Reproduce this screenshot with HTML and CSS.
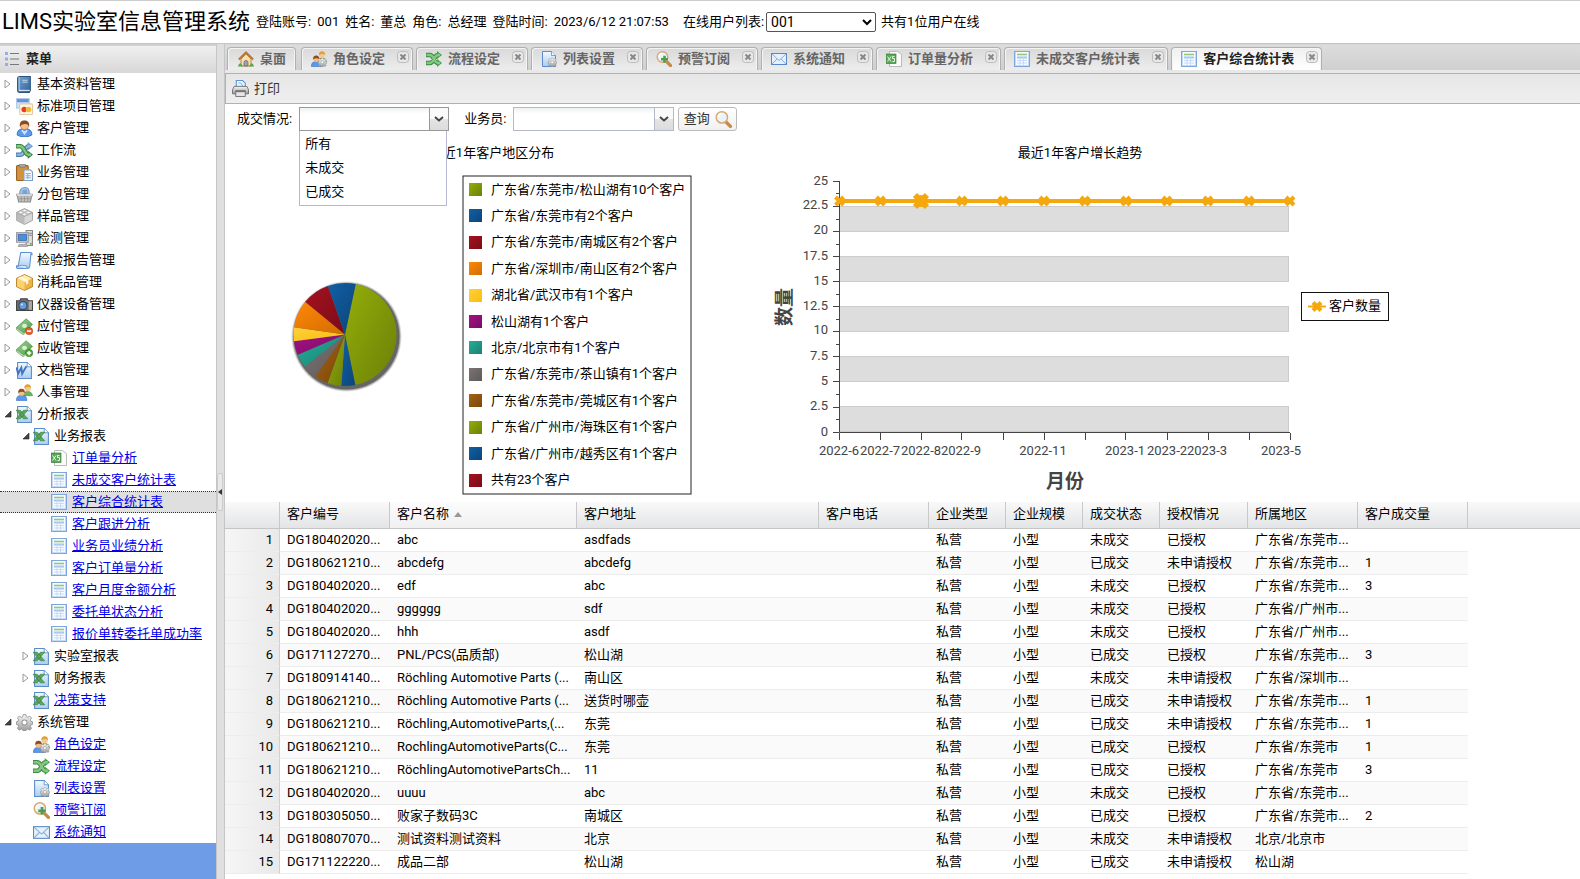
FILE: index.html
```html
<!DOCTYPE html>
<html lang="zh-CN">
<head>
<meta charset="utf-8">
<title>LIMS实验室信息管理系统</title>
<link rel="stylesheet" href="styles.css">
</head>
<body>
<svg class="defs" aria-hidden="true">
  <defs>
    <linearGradient id="g-page" x1="0" y1="0" x2="0" y2="1"><stop offset="0" stop-color="#f4faff"/><stop offset="1" stop-color="#a9cdf2"/></linearGradient>
    <linearGradient id="g-book" x1="0" y1="0" x2="1" y2="1"><stop offset="0" stop-color="#74a3d0"/><stop offset="1" stop-color="#2f639b"/></linearGradient>
    <linearGradient id="g-grey" x1="0" y1="0" x2="0" y2="1"><stop offset="0" stop-color="#f6f6f6"/><stop offset="1" stop-color="#9a9a9a"/></linearGradient>
    <linearGradient id="g-green" x1="0" y1="0" x2="1" y2="1"><stop offset="0" stop-color="#9ed68f"/><stop offset="1" stop-color="#4c9a4c"/></linearGradient>
  </defs>
  <symbol id="i-list" viewBox="0 0 16 16"><g fill="#8fb0ea"><rect x="1" y="1" width="3" height="3"/><rect x="1" y="6.500" width="3" height="3"/><rect x="1" y="12" width="3" height="3"/></g><path d="M6 2.500h9M6 8h9M6 13.500h9" stroke="#777" stroke-width="1.200"/></symbol>
  <symbol id="i-book" viewBox="0 0 16 16"><path d="M3.500.5h10v13l-1 2h-9q-2 0-2-2v-11q0-2 2-2z" fill="url(#g-book)" stroke="#2c5480"/><path d="M3 1v13" stroke="#a8c8e6"/><path d="M6 4h5M6 5.800h5" stroke="#d4e6f6" stroke-width=".8"/><path d="M3 13.500h10" stroke="#e6eef6"/></symbol>
  <symbol id="i-cards" viewBox="0 0 16 16"><rect x=".5" y=".5" width="12" height="9" fill="#cfe0f5" stroke="#b4cbe8"/><path d="M1 1h11v3H1z" fill="#5f93d8"/><rect x="3.500" y="5.500" width="12" height="10" rx="1" fill="#fff6e6" stroke="#e1c9a0"/><circle cx="7.700" cy="10.800" r="2.600" fill="#e63c2c"/><circle cx="11.800" cy="10.800" r="2.600" fill="#f3b83a"/></symbol>
  <symbol id="i-user" viewBox="0 0 16 16"><path d="M1 14q0-6 7-6t7 6q-3 2-7 2t-7-2z" fill="#5e9bea" stroke="#2f68b8" stroke-width=".8"/><path d="M6 9q2 3 4 0l1 1-3 4-3-4z" fill="#cfe3fb"/><circle cx="8" cy="5" r="4" fill="#f2c08c" stroke="#a8683a" stroke-width=".5"/><path d="M3.600 6Q3 .5 8 .5T12.400 6Q11 3.500 8 3.800T3.600 6z" fill="#8a4b22"/></symbol>
  <symbol id="i-flow" viewBox="0 0 16 16"><path d="M0 4h4q2 0 4 4t4 4h1M0 12h4q2 0 4-4t4-4h1" fill="none" stroke="#3d8a42" stroke-width="4.400"/><path d="M11 0l5 4-5 4zM11 8l5 4-5 4z" fill="#4d9f50"/><path d="M.5 4H4q2 0 4 4t4 4h2M.5 12H4q2 0 4-4t4-4h2" fill="none" stroke="#84c884" stroke-width="2.400"/></symbol>
  <symbol id="i-flowblue" viewBox="0 0 16 16"><path d="M0 12h4q2 0 4-4t4-4h1" fill="none" stroke="#4f82ba" stroke-width="4.400"/><path d="M11 0l5 4-5 4z" fill="#6d9ccf"/><path d="M.5 12H4q2 0 4-4t4-4h2" fill="none" stroke="#94bbe2" stroke-width="2"/><path d="M0 4h4q2 0 4 4t4 4h1" fill="none" stroke="#3b8543" stroke-width="4.400"/><path d="M11 8l5 4-5 4z" fill="#3b8543"/><path d="M.5 4H4q2 0 4 4t4 4h2" fill="none" stroke="#83c783" stroke-width="2.200"/></symbol>
  <symbol id="i-clip" viewBox="0 0 16 16"><rect x=".5" y="1.500" width="11" height="14" rx="1" fill="#d3923f" stroke="#9a6020"/><rect x="3" y="0" width="6" height="3" rx="1" fill="#aaa" stroke="#666" stroke-width=".5"/><path d="M7.500 5.500h6l2 2v8h-8z" fill="#f3f8fe" stroke="#7fa0c8"/><path d="M9 9h5M9 11h5M9 13h5M11 8.500V14" stroke="#8cb2e0"/></symbol>
  <symbol id="i-basket" viewBox="0 0 16 16"><path d="M3.500 8Q3 2 8 1.500T12.500 8" fill="#a6c6e6" stroke="#7a98b8"/><path d="M6 8V4l4-1 1 5z" fill="#6fa6dc"/><path d="M1 8h14l-1.500 7h-11z" fill="#c4c4c4" stroke="#888"/><path d="M.5 7.500h15v2H.5z" fill="#eee" stroke="#999" stroke-width=".6"/><path d="M5 10v5M8 10v5M11 10v5M2 12h12" stroke="#8c8c8c" stroke-width=".7"/></symbol>
  <symbol id="i-brick" viewBox="0 0 16 16"><path d="M8 .5l7.500 3.700v7.500L8 15.500.5 11.700V4.200z" fill="#d8d8d8" stroke="#999" stroke-width=".8"/><path d="M.5 4.200L8 8v7.500L.5 11.700z" fill="#bbb"/><path d="M.5 4.200L8 8l7.500-3.800" fill="none" stroke="#aaa"/><g fill="#f4f4f4" stroke="#999" stroke-width=".5"><ellipse cx="8" cy="2.400" rx="2" ry="1.300"/><ellipse cx="4.500" cy="4.200" rx="2" ry="1.300"/><ellipse cx="11.500" cy="4.200" rx="2" ry="1.300"/><ellipse cx="8" cy="6" rx="2" ry="1.300"/></g></symbol>
  <symbol id="i-pc" viewBox="0 0 16 16"><path d="M9.500.5h6v14h-6z" fill="#ddd" stroke="#888"/><path d="M11 3h4M11 5h4" stroke="#888"/><rect x=".5" y="2.500" width="11" height="9" fill="#d4d4d4" stroke="#999"/><rect x="2" y="4" width="8" height="6" fill="#4c8ddc" stroke="#2c62a8" stroke-width=".6"/><path d="M3 13.500h7l1 2H2z" fill="#bbb" stroke="#888" stroke-width=".6"/><circle cx="14" cy="13" r=".9" fill="#4cae3c"/></symbol>
  <symbol id="i-scroll" viewBox="0 0 16 16"><path d="M4.500.5h9q2 0 1.500 2l-1-.5-1 11q-.3 2.500-2.500 2.500h-9q-1.500-.5-1-2.500l1.500.5z" fill="url(#g-page)" stroke="#5f92cc"/><path d="M1 13q5-1 9 0 0 2.500 1 2.500" fill="#dcecfb" stroke="#5f92cc" stroke-width=".8"/></symbol>
  <symbol id="i-box" viewBox="0 0 16 16"><path d="M8 .5L15.500 4v8L8 15.500.5 12V4z" fill="#efb440" stroke="#b07a1c" stroke-width=".8"/><path d="M8 1l7 3.200L8 8 1 4.200z" fill="#ffeab0"/><path d="M1 4.500L8 8v7L1 11.800z" fill="#fbd26c"/><path d="M4.500 2.500l7 3.500v3l-2 1V7L2.800 3.500z" fill="#fffbe8"/></symbol>
  <symbol id="i-camera" viewBox="0 0 16 16"><path d="M.5 4.500h3l1-2h6l1 2h4v9H.5z" fill="#707070" stroke="#444"/><path d="M12 5h3v8h-3z" fill="#aaa"/><circle cx="6.500" cy="9" r="4.300" fill="#3a4654"/><circle cx="6.500" cy="9" r="3.300" fill="#5f9de6"/><circle cx="5.500" cy="8" r="1" fill="#cfe4fc"/></symbol>
  <symbol id="i-cash" viewBox="0 0 16 16"><path d="M.5 9L9.500.8l6 5.200-8.500 8.500z" fill="url(#g-green)" stroke="#5a9a5a" stroke-width=".8"/><path d="M.5 9v2l6.500 5 1-1.500z" fill="#b6dcae" stroke="#5a9a5a" stroke-width=".6"/><ellipse cx="8" cy="7.500" rx="2.400" ry="2" fill="#d8f0cf"/></symbol>
  <symbol id="i-cashout" viewBox="0 0 16 16"><use href="#i-cash"/><circle cx="12.300" cy="12.300" r="3.500" fill="#e6602c" stroke="#a83a12" stroke-width=".5"/><path d="M10.300 12.300h4" stroke="#fff" stroke-width="1.500"/></symbol>
  <symbol id="i-cashin" viewBox="0 0 16 16"><use href="#i-cash"/><circle cx="12.300" cy="12.300" r="3.500" fill="#55a83c" stroke="#2c6c1c" stroke-width=".5"/><path d="M10.300 12.300h4M12.300 10.300v4" stroke="#fff" stroke-width="1.400"/></symbol>
  <symbol id="i-page" viewBox="0 0 16 16"><path d="M1.500.5h9l4 4v11h-13z" fill="url(#g-page)" stroke="#5b8cc8"/><path d="M10.500.5v4h4" fill="#fff" stroke="#5b8cc8" stroke-width=".8"/></symbol>
  <symbol id="i-word" viewBox="0 0 16 16"><use href="#i-page"/><path d="M.5 5l1.500 6L5 5.500 5.800 11l4-7" fill="none" stroke="#3f74c4" stroke-width="1.800"/></symbol>
  <symbol id="i-excel" viewBox="0 0 16 16"><use href="#i-page"/><path d="M0 4h4l7 8H7zM7 4h4l-7 8H0z" fill="#5aa85c" stroke="#2f7434" stroke-width=".5"/></symbol>
  <symbol id="i-sheet" viewBox="0 0 16 16"><path d="M3.500.5h8l4 3v12h-12z" fill="#fbfbfb" stroke="#bbb"/><rect x="0" y="3" width="10" height="9.500" fill="#5aa65a" stroke="#2f742f" stroke-width=".6"/><path d="M1.500 5.500l3.500 5M5 5.500l-3.500 5M8.500 5.500H6.500v2h2v3h-2" fill="none" stroke="#e4f4e0"/></symbol>
  <symbol id="i-people" viewBox="0 0 16 16"><path d="M7 11q0-4 4-4t4.500 4z" fill="#6bb45e" stroke="#3f8236" stroke-width=".5"/><circle cx="11" cy="3.800" r="3" fill="#f3c896"/><path d="M7.800 4Q8 .3 11 .3T14.200 4Q12 1.800 7.800 4z" fill="#e0a136"/><path d="M.3 15.500q0-5 5-5t5 5z" fill="#5a98ea" stroke="#2d62b2" stroke-width=".5"/><circle cx="5.200" cy="8" r="3" fill="#f1bd8a"/><path d="M2 8.500Q2 4.500 5.200 4.500T8.400 8.500Q6 6 2 8.500z" fill="#8d4c22"/></symbol>
  <symbol id="i-gear" viewBox="0 0 16 16"><path d="M6.700.5h2.600l.4 2 1.400.6 1.800-1.200 1.800 1.900-1.200 1.700.6 1.400 1.500.4v2.500l-1.500.5-.6 1.400 1.200 1.700-1.800 1.800-1.800-1.100-1.400.5-.4 1.800H6.700l-.4-1.800-1.400-.5-1.800 1.100-1.800-1.800 1.200-1.700-.6-1.400-1.500-.5V7.300l1.500-.4.600-1.400-1.200-1.700 1.800-1.900 1.800 1.200 1.400-.6z" fill="url(#g-grey)" stroke="#888" stroke-width=".7"/><circle cx="8" cy="8" r="2.400" fill="#fff" stroke="#999"/></symbol>
  <symbol id="i-role" viewBox="0 0 16 16"><use href="#i-people"/><use href="#i-gear" x="6.500" y="6.500" width="9.500" height="9.500"/></symbol>
  <symbol id="i-listset" viewBox="0 0 16 16"><use href="#i-page"/><use href="#i-gear" x="6.500" y="6.500" width="9.500" height="9.500"/></symbol>
  <symbol id="i-search" viewBox="0 0 16 16"><path d="M10.500 10.500l4 4" stroke="#c98a48" stroke-width="3.200" stroke-linecap="round"/><circle cx="6.500" cy="6" r="5.300" fill="#e9f3fb" stroke="#d9a871" stroke-width="1.400"/><path d="M3 6q0-3 3-3.500" fill="none" stroke="#fff" stroke-width="1.500"/></symbol>
  <symbol id="i-searchadd" viewBox="0 0 16 16"><use href="#i-search"/><path d="M8.500 4.800v7M5 8.300h7" stroke="#4a9e4c" stroke-width="2.600"/></symbol>
  <symbol id="i-mail" viewBox="0 0 16 16"><rect x=".5" y="2.500" width="15" height="11" fill="#e4f0fc" stroke="#5a89c4"/><path d="M1 3l7 6.500L15 3M1 13l5-5M15 13l-5-5" fill="none" stroke="#87aede"/></symbol>
  <symbol id="i-table" viewBox="0 0 16 16"><rect x=".5" y=".5" width="15" height="15" fill="#f7fbff" stroke="#7fa6dc"/><path d="M1.500 1v14M14.500 1v14M1 14.500h14" stroke="#c4daf5"/><path d="M3 3.500h10" stroke="#8fca78" stroke-width="1.600"/><path d="M3 6.500h10" stroke="#a5c5ed" stroke-width="2"/><path d="M3 9.500h10M3 12h10M6 6v8M9.500 6v8" stroke="#c0d6f2" stroke-width=".8"/></symbol>
  <symbol id="i-home" viewBox="0 0 16 16"><path d="M3 8l5-5 5 5v7H3z" fill="#f7dfb2" stroke="#b98748"/><path d="M.8 8.500L8 1.500l7.200 7" fill="none" stroke="#b9793c" stroke-width="2"/><path d="M6 15v-3.500a2 2 0 0 1 4 0V15z" fill="#8aa8c4" stroke="#6c5030" stroke-width=".6"/><path d="M0 15q2-5 4-1l1 1.500H0zM16 15q-2-5-4-1l-1 1.500h5z" fill="#5ba64c"/></symbol>
  <symbol id="i-print" viewBox="0 0 16 16"><path d="M4 7V.5h6L12.500 3v4z" fill="#e9f4ff" stroke="#5d93cf"/><path d="M6 3q2-1 3 1t2 2" fill="none" stroke="#8fbdea"/><path d="M2 6h12l1.500 3v4H.5V9z" fill="url(#g-grey)" stroke="#666" stroke-width=".8"/><path d="M3.500 10h9v5.500h-9z" fill="#e6e6e6" stroke="#666" stroke-width=".8"/><path d="M3.500 10h9v1.500h-9z" fill="#777"/></symbol>
  <symbol id="i-closed" viewBox="0 0 8 10"><path d="M1 1l5 4-5 4z" fill="#fff" stroke="#999"/></symbol>
  <symbol id="i-open" viewBox="0 0 8 8"><path d="M7 1v6H1z" fill="#444" stroke="#222" stroke-width=".6"/></symbol>
  <symbol id="i-x" viewBox="0 0 12 12"><rect x=".5" y=".5" width="11" height="11" rx="3" fill="#e8e8e8" stroke="#bbb"/><path d="M3.500 3.500l5 5M8.500 3.500l-5 5" stroke="#888" stroke-width="2"/></symbol>
  <symbol id="i-down" viewBox="0 0 10 6"><path d="M1 1l4 3.500L9 1" fill="none" stroke="#444" stroke-width="2"/></symbol>
</svg>

<header class="top">
  <h1>LIMS实验室信息管理系统</h1>
  <p class="login"><span>登陆账号:</span><b>001</b><span>姓名:</span><b>董总</b><span>角色:</span><b>总经理</b><span>登陆时间:</span><b>2023/6/12 21:07:53</b></p>
  <label class="online" for="online">在线用户列表:</label>
  <select id="online"><option>001</option></select>
  <span class="count">共有1位用户在线</span>
</header>

<div class="body">
  <aside class="side">
    <h2 class="side-title"><svg><use href="#i-list"/></svg>菜单</h2>
    <ul class="tree">
      <li><svg class="arw"><use href="#i-closed"/></svg><svg class="ico"><use href="#i-book"/></svg><span>基本资料管理</span></li>
      <li><svg class="arw"><use href="#i-closed"/></svg><svg class="ico"><use href="#i-cards"/></svg><span>标准项目管理</span></li>
      <li><svg class="arw"><use href="#i-closed"/></svg><svg class="ico"><use href="#i-user"/></svg><span>客户管理</span></li>
      <li><svg class="arw"><use href="#i-closed"/></svg><svg class="ico"><use href="#i-flowblue"/></svg><span>工作流</span></li>
      <li><svg class="arw"><use href="#i-closed"/></svg><svg class="ico"><use href="#i-clip"/></svg><span>业务管理</span></li>
      <li><svg class="arw"><use href="#i-closed"/></svg><svg class="ico"><use href="#i-basket"/></svg><span>分包管理</span></li>
      <li><svg class="arw"><use href="#i-closed"/></svg><svg class="ico"><use href="#i-brick"/></svg><span>样品管理</span></li>
      <li><svg class="arw"><use href="#i-closed"/></svg><svg class="ico"><use href="#i-pc"/></svg><span>检测管理</span></li>
      <li><svg class="arw"><use href="#i-closed"/></svg><svg class="ico"><use href="#i-scroll"/></svg><span>检验报告管理</span></li>
      <li><svg class="arw"><use href="#i-closed"/></svg><svg class="ico"><use href="#i-box"/></svg><span>消耗品管理</span></li>
      <li><svg class="arw"><use href="#i-closed"/></svg><svg class="ico"><use href="#i-camera"/></svg><span>仪器设备管理</span></li>
      <li><svg class="arw"><use href="#i-closed"/></svg><svg class="ico"><use href="#i-cashout"/></svg><span>应付管理</span></li>
      <li><svg class="arw"><use href="#i-closed"/></svg><svg class="ico"><use href="#i-cashin"/></svg><span>应收管理</span></li>
      <li><svg class="arw"><use href="#i-closed"/></svg><svg class="ico"><use href="#i-word"/></svg><span>文档管理</span></li>
      <li><svg class="arw"><use href="#i-closed"/></svg><svg class="ico"><use href="#i-people"/></svg><span>人事管理</span></li>
      <li><svg class="arw"><use href="#i-open"/></svg><svg class="ico"><use href="#i-excel"/></svg><span>分析报表</span></li>
      <li class="l2"><svg class="arw"><use href="#i-open"/></svg><svg class="ico"><use href="#i-excel"/></svg><span>业务报表</span></li>
      <li class="l3"><svg class="ico"><use href="#i-sheet"/></svg><a href="#">订单量分析</a></li>
      <li class="l3"><svg class="ico"><use href="#i-table"/></svg><a href="#">未成交客户统计表</a></li>
      <li class="l3 current"><svg class="ico"><use href="#i-table"/></svg><a href="#">客户综合统计表</a></li>
      <li class="l3"><svg class="ico"><use href="#i-table"/></svg><a href="#">客户跟进分析</a></li>
      <li class="l3"><svg class="ico"><use href="#i-table"/></svg><a href="#">业务员业绩分析</a></li>
      <li class="l3"><svg class="ico"><use href="#i-table"/></svg><a href="#">客户订单量分析</a></li>
      <li class="l3"><svg class="ico"><use href="#i-table"/></svg><a href="#">客户月度金额分析</a></li>
      <li class="l3"><svg class="ico"><use href="#i-table"/></svg><a href="#">委托单状态分析</a></li>
      <li class="l3"><svg class="ico"><use href="#i-table"/></svg><a href="#">报价单转委托单成功率</a></li>
      <li class="l2"><svg class="arw"><use href="#i-closed"/></svg><svg class="ico"><use href="#i-excel"/></svg><span>实验室报表</span></li>
      <li class="l2"><svg class="arw"><use href="#i-closed"/></svg><svg class="ico"><use href="#i-excel"/></svg><span>财务报表</span></li>
      <li class="l2 leaf"><svg class="ico"><use href="#i-excel"/></svg><a href="#">决策支持</a></li>
      <li><svg class="arw"><use href="#i-open"/></svg><svg class="ico"><use href="#i-gear"/></svg><span>系统管理</span></li>
      <li class="l2 leaf"><svg class="ico"><use href="#i-role"/></svg><a href="#">角色设定</a></li>
      <li class="l2 leaf"><svg class="ico"><use href="#i-flow"/></svg><a href="#">流程设定</a></li>
      <li class="l2 leaf"><svg class="ico"><use href="#i-listset"/></svg><a href="#">列表设置</a></li>
      <li class="l2 leaf"><svg class="ico"><use href="#i-searchadd"/></svg><a href="#">预警订阅</a></li>
      <li class="l2 leaf"><svg class="ico"><use href="#i-mail"/></svg><a href="#">系统通知</a></li>
    </ul>
  </aside>

  <div class="split"><button type="button" aria-label="折叠菜单"><svg viewBox="0 0 4 6"><path d="M4 0v6L0 3z" fill="#333"/></svg></button></div>

  <main class="main">
    <nav class="tabs">
      <div class="tab home"><svg class="ico"><use href="#i-home"/></svg>桌面</div>
      <div class="tab"><svg class="ico"><use href="#i-role"/></svg>角色设定<button type="button" aria-label="关闭"><svg><use href="#i-x"/></svg></button></div>
      <div class="tab"><svg class="ico"><use href="#i-flow"/></svg>流程设定<button type="button" aria-label="关闭"><svg><use href="#i-x"/></svg></button></div>
      <div class="tab"><svg class="ico"><use href="#i-listset"/></svg>列表设置<button type="button" aria-label="关闭"><svg><use href="#i-x"/></svg></button></div>
      <div class="tab"><svg class="ico"><use href="#i-searchadd"/></svg>预警订阅<button type="button" aria-label="关闭"><svg><use href="#i-x"/></svg></button></div>
      <div class="tab"><svg class="ico"><use href="#i-mail"/></svg>系统通知<button type="button" aria-label="关闭"><svg><use href="#i-x"/></svg></button></div>
      <div class="tab"><svg class="ico"><use href="#i-sheet"/></svg>订单量分析<button type="button" aria-label="关闭"><svg><use href="#i-x"/></svg></button></div>
      <div class="tab"><svg class="ico"><use href="#i-table"/></svg>未成交客户统计表<button type="button" aria-label="关闭"><svg><use href="#i-x"/></svg></button></div>
      <div class="tab active"><svg class="ico"><use href="#i-table"/></svg>客户综合统计表<button type="button" aria-label="关闭"><svg><use href="#i-x"/></svg></button></div>
    </nav>
    <div class="toolbar"><button type="button"><svg><use href="#i-print"/></svg>打印</button></div>

    <form class="filters">
      <label for="deal">成交情况:</label>
      <div class="combo focus">
        <input id="deal" type="text"><button type="button" aria-label="展开"><svg><use href="#i-down"/></svg></button>
        <ul class="menu"><li>所有</li><li>未成交</li><li>已成交</li></ul>
      </div>
      <label for="sales">业务员:</label>
      <div class="combo wide">
        <input id="sales" type="text"><button type="button" aria-label="展开"><svg><use href="#i-down"/></svg></button>
      </div>
      <button class="query" type="button">查询<svg><use href="#i-search"/></svg></button>
    </form>

    <section class="charts">
      <figure>
        <figcaption>最近1年客户地区分布</figcaption>
        <svg class="chart" viewBox="225 170 534 332">
          <defs>
            <linearGradient id="c1" x1="0" y1="0" x2="1" y2="1"><stop offset="0" stop-color="#94ae0a"/><stop offset="1" stop-color="#6c7f07"/></linearGradient>
            <linearGradient id="c2" x1="0" y1="0" x2="1" y2="1"><stop offset="0" stop-color="#115fa6"/><stop offset="1" stop-color="#0c4579"/></linearGradient>
            <linearGradient id="c3" x1="0" y1="0" x2="1" y2="1"><stop offset="0" stop-color="#a61120"/><stop offset="1" stop-color="#790c17"/></linearGradient>
            <linearGradient id="c4" x1="0" y1="0" x2="1" y2="1"><stop offset="0" stop-color="#ff8809"/><stop offset="1" stop-color="#d26c00"/></linearGradient>
            <linearGradient id="c5" x1="0" y1="0" x2="1" y2="1"><stop offset="0" stop-color="#ffd13e"/><stop offset="1" stop-color="#fbbd08"/></linearGradient>
            <linearGradient id="c6" x1="0" y1="0" x2="1" y2="1"><stop offset="0" stop-color="#a61187"/><stop offset="1" stop-color="#790c62"/></linearGradient>
            <linearGradient id="c7" x1="0" y1="0" x2="1" y2="1"><stop offset="0" stop-color="#24ad9a"/><stop offset="1" stop-color="#1b8172"/></linearGradient>
            <linearGradient id="c8" x1="0" y1="0" x2="1" y2="1"><stop offset="0" stop-color="#7c7474"/><stop offset="1" stop-color="#5f5959"/></linearGradient>
            <linearGradient id="c9" x1="0" y1="0" x2="1" y2="1"><stop offset="0" stop-color="#a66111"/><stop offset="1" stop-color="#79470c"/></linearGradient>
          </defs>
          <circle cx="346.500" cy="336.500" r="55" fill="#000" opacity=".12"/>
          <circle cx="346.500" cy="336.500" r="54" fill="#000" opacity=".25"/>
          <circle cx="346.500" cy="336.500" r="53" fill="#000" opacity=".4"/>
          <path fill="url(#c1)" d="M345 334.500L355.700 284.100A51.500 51.500 0 0 1 355.300 385z"/>
          <path fill="url(#c2)" d="M345 334.500L355.300 385A51.500 51.500 0 0 1 341.300 385.900z"/>
          <path fill="url(#c1)" d="M345 334.500L341.300 385.900A51.500 51.500 0 0 1 327.600 383z"/>
          <path fill="url(#c9)" d="M345 334.500L327.600 383A51.500 51.500 0 0 1 315.100 376.500z"/>
          <path fill="url(#c8)" d="M345 334.500L315.100 376.500A51.500 51.500 0 0 1 304.900 366.800z"/>
          <path fill="url(#c7)" d="M345 334.500L304.900 366.800A51.500 51.500 0 0 1 297.700 354.800z"/>
          <path fill="url(#c6)" d="M345 334.500L297.700 354.800A51.500 51.500 0 0 1 294 341.300z"/>
          <path fill="url(#c5)" d="M345 334.500L294 341.300A51.500 51.500 0 0 1 294 327.300z"/>
          <path fill="url(#c4)" d="M345 334.500L294 327.300A51.500 51.500 0 0 1 305.200 301.800z"/>
          <path fill="url(#c3)" d="M345 334.500L305.200 301.800A51.500 51.500 0 0 1 327.900 285.900z"/>
          <path fill="url(#c2)" d="M345 334.500L327.900 285.900A51.500 51.500 0 0 1 355.700 284.100z"/>
          <rect x="463" y="176" width="228" height="318" fill="#fff" stroke="#222"/>
          <g>
            <rect x="469" y="183" width="13" height="13" fill="url(#c1)"/><text x="491" y="194">广东省/东莞市/松山湖有10个客户</text>
            <rect x="469" y="209" width="13" height="13" fill="url(#c2)"/><text x="491" y="220">广东省/东莞市有2个客户</text>
            <rect x="469" y="236" width="13" height="13" fill="url(#c3)"/><text x="491" y="246">广东省/东莞市/南城区有2个客户</text>
            <rect x="469" y="262" width="13" height="13" fill="url(#c4)"/><text x="491" y="273">广东省/深圳市/南山区有2个客户</text>
            <rect x="469" y="289" width="13" height="13" fill="url(#c5)"/><text x="491" y="299">湖北省/武汉市有1个客户</text>
            <rect x="469" y="315" width="13" height="13" fill="url(#c6)"/><text x="491" y="326">松山湖有1个客户</text>
            <rect x="469" y="341" width="13" height="13" fill="url(#c7)"/><text x="491" y="352">北京/北京市有1个客户</text>
            <rect x="469" y="368" width="13" height="13" fill="url(#c8)"/><text x="491" y="378">广东省/东莞市/茶山镇有1个客户</text>
            <rect x="469" y="394" width="13" height="13" fill="url(#c9)"/><text x="491" y="405">广东省/东莞市/莞城区有1个客户</text>
            <rect x="469" y="421" width="13" height="13" fill="url(#c1)"/><text x="491" y="431">广东省/广州市/海珠区有1个客户</text>
            <rect x="469" y="447" width="13" height="13" fill="url(#c2)"/><text x="491" y="458">广东省/广州市/越秀区有1个客户</text>
            <rect x="469" y="474" width="13" height="13" fill="url(#c3)"/><text x="491" y="484">共有23个客户</text>
          </g>
        </svg>
      </figure>
      <figure>
        <figcaption>最近1年客户增长趋势</figcaption>
        <svg class="chart" viewBox="759 170 642 332">
          <g fill="#ddd" stroke="#ccc">
            <rect x="839.500" y="206.500" width="449" height="25"/><rect x="839.500" y="256.500" width="449" height="25"/><rect x="839.500" y="306.500" width="449" height="25"/><rect x="839.500" y="356.500" width="449" height="25"/><rect x="839.500" y="406.500" width="449" height="25"/>
          </g>
          <path stroke="#444" fill="none" d="M839.500 181V432.500H1290M833 181.500h6M833 206.500h6M833 231.500h6M833 256.500h6M833 281.500h6M833 306.500h6M833 331.500h6M833 356.500h6M833 381.500h6M833 407.500h6M833 432.500h6M836 193.500h3M836 219.500h3M836 244.500h3M836 269.500h3M836 294.500h3M836 319.500h3M836 344.500h3M836 369.500h3M836 394.500h3M836 419.500h3M839.500 433v7M880.500 433v7M921.500 433v7M961.500 433v7M1003.500 433v7M1044.500 433v7M1085.500 433v7M1125.500 433v7M1167.500 433v7M1208.500 433v7M1249.500 433v7M1290.500 433v7"/>
          <g class="tick end">
            <text x="828" y="185">25</text><text x="828" y="209">22.5</text><text x="828" y="234">20</text><text x="828" y="260">17.5</text><text x="828" y="285">15</text><text x="828" y="310">12.5</text><text x="828" y="334">10</text><text x="828" y="360">7.5</text><text x="828" y="385">5</text><text x="828" y="410">2.5</text><text x="828" y="436">0</text>
          </g>
          <g class="tick mid">
            <text x="839" y="455">2022-6</text><text x="880" y="455">2022-7</text><text x="921" y="455">2022-8</text><text x="961" y="455">2022-9</text><text x="1043" y="455">2022-11</text><text x="1125" y="455">2023-1</text><text x="1167" y="455">2023-2</text><text x="1207" y="455">2023-3</text><text x="1281" y="455">2023-5</text>
          </g>
          <path d="M839 201h451" stroke="#f4a80e" stroke-width="4"/>
          <defs><path id="mk" d="M-4-4L4 4M4-4L-4 4" stroke="#f4a80e" stroke-width="4"/></defs>
          <use href="#mk" x="839.500" y="201"/><use href="#mk" x="880.500" y="201"/><use href="#mk" transform="translate(921 201) scale(1.500)"/><use href="#mk" x="962" y="201"/><use href="#mk" x="1003" y="201"/><use href="#mk" x="1044" y="201"/><use href="#mk" x="1085" y="201"/><use href="#mk" x="1126" y="201"/><use href="#mk" x="1167" y="201"/><use href="#mk" x="1208" y="201"/><use href="#mk" x="1249" y="201"/><use href="#mk" x="1290" y="201"/>
          <circle cx="921" cy="201" r="6" fill="#f4a80e"/>
          <text class="axis" x="1065" y="488">月份</text>
          <text class="axis" transform="translate(791 307) rotate(-90)">数量</text>
          <rect x="1301.500" y="292.500" width="87" height="28" fill="#fff" stroke="#111"/>
          <path d="M1308 306.500h18" stroke="#f4a80e" stroke-width="2"/><use href="#mk" x="1317" y="306.500"/>
          <text x="1329" y="310">客户数量</text>
        </svg>
      </figure>
    </section>

    <table class="grid">
      <colgroup><col class="w55"><col class="w110"><col class="w187"><col class="w242"><col class="w110"><col class="w77"><col class="w77"><col class="w77"><col class="w88"><col class="w110"><col class="w110"><col></colgroup>
      <thead><tr><th></th><th>客户编号</th><th class="sorted">客户名称<svg viewBox="0 0 8 5"><path d="M4 0l4 5H0z" fill="#999"/></svg></th><th>客户地址</th><th>客户电话</th><th>企业类型</th><th>企业规模</th><th>成交状态</th><th>授权情况</th><th>所属地区</th><th>客户成交量</th><th></th></tr></thead>
      <tbody>
        <tr><td>1</td><td>DG180402020...</td><td>abc</td><td>asdfads</td><td></td><td>私营</td><td>小型</td><td>未成交</td><td>已授权</td><td>广东省/东莞市...</td><td></td><td></td></tr>
        <tr><td>2</td><td>DG180621210...</td><td>abcdefg</td><td>abcdefg</td><td></td><td>私营</td><td>小型</td><td>已成交</td><td>未申请授权</td><td>广东省/东莞市...</td><td>1</td><td></td></tr>
        <tr><td>3</td><td>DG180402020...</td><td>edf</td><td>abc</td><td></td><td>私营</td><td>小型</td><td>未成交</td><td>已授权</td><td>广东省/东莞市...</td><td>3</td><td></td></tr>
        <tr><td>4</td><td>DG180402020...</td><td>gggggg</td><td>sdf</td><td></td><td>私营</td><td>小型</td><td>未成交</td><td>已授权</td><td>广东省/广州市...</td><td></td><td></td></tr>
        <tr><td>5</td><td>DG180402020...</td><td>hhh</td><td>asdf</td><td></td><td>私营</td><td>小型</td><td>未成交</td><td>已授权</td><td>广东省/广州市...</td><td></td><td></td></tr>
        <tr><td>6</td><td>DG171127270...</td><td>PNL/PCS(品质部)</td><td>松山湖</td><td></td><td>私营</td><td>小型</td><td>已成交</td><td>已授权</td><td>广东省/东莞市...</td><td>3</td><td></td></tr>
        <tr><td>7</td><td>DG180914140...</td><td>Röchling Automotive Parts (...</td><td>南山区</td><td></td><td>私营</td><td>小型</td><td>未成交</td><td>未申请授权</td><td>广东省/深圳市...</td><td></td><td></td></tr>
        <tr><td>8</td><td>DG180621210...</td><td>Röchling Automotive Parts (...</td><td>送货时哪壶</td><td></td><td>私营</td><td>小型</td><td>已成交</td><td>未申请授权</td><td>广东省/东莞市...</td><td>1</td><td></td></tr>
        <tr><td>9</td><td>DG180621210...</td><td>Röchling,AutomotiveParts,(...</td><td>东莞</td><td></td><td>私营</td><td>小型</td><td>已成交</td><td>未申请授权</td><td>广东省/东莞市...</td><td>1</td><td></td></tr>
        <tr><td>10</td><td>DG180621210...</td><td>RochlingAutomotiveParts(C...</td><td>东莞</td><td></td><td>私营</td><td>小型</td><td>已成交</td><td>已授权</td><td>广东省/东莞市</td><td>1</td><td></td></tr>
        <tr><td>11</td><td>DG180621210...</td><td>RöchlingAutomotivePartsCh...</td><td>11</td><td></td><td>私营</td><td>小型</td><td>已成交</td><td>已授权</td><td>广东省/东莞市</td><td>3</td><td></td></tr>
        <tr><td>12</td><td>DG180402020...</td><td>uuuu</td><td>abc</td><td></td><td>私营</td><td>小型</td><td>未成交</td><td>已授权</td><td>广东省/东莞市...</td><td></td><td></td></tr>
        <tr><td>13</td><td>DG180305050...</td><td>败家子数码3C</td><td>南城区</td><td></td><td>私营</td><td>小型</td><td>已成交</td><td>已授权</td><td>广东省/东莞市...</td><td>2</td><td></td></tr>
        <tr><td>14</td><td>DG180807070...</td><td>测试资料测试资料</td><td>北京</td><td></td><td>私营</td><td>小型</td><td>未成交</td><td>未申请授权</td><td>北京/北京市</td><td></td><td></td></tr>
        <tr><td>15</td><td>DG171122220...</td><td>成品二部</td><td>松山湖</td><td></td><td>私营</td><td>小型</td><td>已成交</td><td>未申请授权</td><td>松山湖</td><td></td><td></td></tr>
      </tbody>
    </table>
  </main>
</div>
</body>
</html>
```
FILE: styles.css
```css
* { box-sizing: border-box; }
body {
  margin: 0;
  min-height: 100vh;
  display: flex;
  flex-direction: column;
  font: 13px/20px Roboto, "Noto Sans CJK SC", sans-serif;
  color: #000;
  background: #fff;
}
h1, h2, p, ul, figure { margin: 0; padding: 0; }
ul { list-style: none; }
button, input, select { font: inherit; color: inherit; }
button { padding: 0; border: 0; background: none; }
svg { display: block; flex: none; }
.defs { position: absolute; width: 0; height: 0; }

/* header */
.top {
  display: flex;
  align-items: center;
  height: 44px;
  padding-left: 2px;
  border-top: 1px solid #ccc;
  border-bottom: 1px solid #c4c4c4;
  white-space: nowrap;
}
.top h1 { font-size: 22px; line-height: 30px; font-weight: 400; }
.login { display: flex; gap: 6px; padding-left: 6px; }
.login b { font-weight: 400; }
.online { padding: 0 2px 0 14px; }
.top select {
  width: 110px;
  height: 20px;
  padding: 0;
  border: 1px solid #555;
  border-radius: 2px;
  background: #fff;
  font-size: 14px;
}
.count { padding-left: 5px; }

.body { flex: 1; display: flex; background: #dfdfdf; }

/* menu */
.side { width: 216px; flex: none; background: #6f9ce6; }
.side-title {
  display: flex;
  align-items: center;
  gap: 6px;
  height: 29px;
  padding-left: 4px;
  border-top: 2px solid #d0d0d0;
  border-bottom: 1px solid #d8d8d8;
  background: linear-gradient(#f0f0f0, #d8d8d8);
  font-size: 13px;
  color: #222;
}
.side-title svg { width: 16px; height: 16px; }
.tree { background: #fff; }
.tree li {
  display: flex;
  align-items: center;
  height: 22px;
  padding-left: 4px;
  white-space: nowrap;
}
.tree span, .tree a { padding-bottom: 1px; }
.tree .l2 { padding-left: 22px; }
.tree .leaf { padding-left: 33px; }
.tree .l3 { padding-left: 51px; }
.tree .current {
  background: #dfdfdf;
  border-top: 1px dotted #333;
  border-bottom: 1px dotted #333;
}
.arw { width: 8px; height: 10px; margin-right: 4px; }
.tree .l2 .arw { margin-right: 3px; }
.ico { width: 17px; height: 17px; margin-right: 4px; }
.l3 .ico { width: 16px; height: 16px; margin-right: 5px; }
.tree a { color: #00e; text-decoration: underline; }

.split {
  width: 9px;
  flex: none;
  padding-top: 429px;
  border-left: 1px solid #c6c6c6;
  border-right: 1px solid #c6c6c6;
  background: #dfdfdf;
}
.split button {
  display: flex;
  align-items: center;
  justify-content: center;
  width: 6px;
  height: 38px;
  border: 1px solid #ccc;
  border-radius: 3px 0 0 3px;
  background: #e8e8e8;
}
.split svg { width: 4px; height: 6px; }

.main { flex: 1; min-width: 0; background: #fff; }

/* tabs */
.tabs {
  display: flex;
  gap: 3px;
  height: 29px;
  padding: 2px 2px 0;
  border-top: 1px solid #d8d8d8;
  border-bottom: 3px solid #e8e8e8;
  background: linear-gradient(#dcdcdc, #d0d0d0);
}
.tab {
  display: flex;
  align-items: center;
  padding: 0 3px 0 9px;
  border: 1px solid #b0b0b0;
  border-bottom: 0;
  border-radius: 4px 4px 0 0;
  background: linear-gradient(#d9d9d9, #ededed);
  box-shadow: inset 1px 1px #f4f4f4, inset -1px 0 #f4f4f4;
  font-weight: 700;
  color: #666;
  white-space: nowrap;
}
.tab.home { margin-right: 2px; padding-right: 9px; padding-left: 10px; }
.tab.active { background: linear-gradient(#efefef, #fff); color: #222; }
.tab .ico { margin-right: 6px; width: 16px; height: 16px; }
.tab button { margin: 0 0 4px 12px; }
.tab button svg { width: 12px; height: 12px; }

.toolbar {
  display: flex;
  align-items: center;
  height: 31px;
  padding-left: 6px;
  border: 1px solid #b8adb2;
  border-right: 0;
  background: linear-gradient(#e6e6e6, #efefef);
}
.toolbar button { display: flex; align-items: center; gap: 5px; color: #333; }
.toolbar svg { width: 17px; height: 17px; }

/* filters */
.filters {
  display: flex;
  align-items: center;
  height: 32px;
  padding: 0 12px 2px;
  white-space: nowrap;
}
.combo { position: relative; display: flex; width: 150px; height: 24px; margin: 0 15px 0 7px; }
.combo.wide { width: 161px; margin: 0 4px 0 7px; }
.combo input {
  flex: 1;
  min-width: 0;
  padding: 0 4px;
  border: 1px solid #b5b8c8;
  border-right: 0;
  background: linear-gradient(#eef2f2, #fff 6px);
  outline: 0;
}
.combo button {
  display: flex;
  align-items: center;
  justify-content: center;
  width: 20px;
  border: 1px solid #b5b8c8;
  background: linear-gradient(#fafafa 50%, #e4e4e4 50%, #dcdcdc);
}
.combo.focus input, .combo.focus button { border-color: #999; }
.combo button svg { width: 10px; height: 6px; }
.menu {
  position: absolute;
  left: 0;
  top: 24px;
  z-index: 2;
  width: 148px;
  padding: 1px 0;
  border: 1px solid #b5b8d0;
  border-top: 0;
  background: #fff;
}
.menu li { height: 24px; padding-left: 5px; line-height: 24px; }
.query {
  display: flex;
  align-items: center;
  justify-content: center;
  gap: 5px;
  width: 59px;
  height: 24px;
  border: 1px solid #bbb;
  border-radius: 3px;
  background: linear-gradient(#fff, #f0f0f0);
  color: #333;
}
.query svg { width: 17px; height: 17px; }

/* charts */
.charts { display: grid; grid-template-columns: 534px 642px; }
.charts figcaption { height: 34px; line-height: 34px; text-align: center; }
.chart { width: 100%; height: auto; font-size: 13px; }
.tick { fill: #444; }
.end { text-anchor: end; }
.mid { text-anchor: middle; }
.chart .axis { font-size: 19px; font-weight: 700; fill: #444; text-anchor: middle; }

/* customer table */
.grid { width: 100%; table-layout: fixed; border-collapse: separate; border-spacing: 0; }
.w55 { width: 55px; }
.w77 { width: 77px; }
.w88 { width: 88px; }
.w110 { width: 110px; }
.w187 { width: 187px; }
.w242 { width: 242px; }
.grid th, .grid td { padding: 0 6px 0 7px; text-align: left; font-weight: 400; white-space: nowrap; overflow: hidden; }
.grid th {
  height: 27px;
  padding-bottom: 2px;
  border-right: 1px solid #c8c8c8;
  border-bottom: 1px solid #c5c5c5;
  background: linear-gradient(#f9f9f9, #e3e4e6);
}
.grid th.sorted { background: linear-gradient(#fcfcfc, #f0f0f0); }
.grid th svg { display: inline-block; width: 8px; height: 5px; margin-left: 5px; vertical-align: middle; }
.grid th:last-child { border-right: 0; }
.grid td { height: 23px; border-bottom: 1px solid #ededed; }
.grid tr:nth-child(even) td { background: #fafafa; }
.grid tbody tr td:first-child {
  border-right: 1px solid #d0d0d0;
  background: linear-gradient(90deg, #f6f6f6, #e9e9e9);
  text-align: right;
}
.grid tbody tr td:last-child { border: 0; background: none; }
```
